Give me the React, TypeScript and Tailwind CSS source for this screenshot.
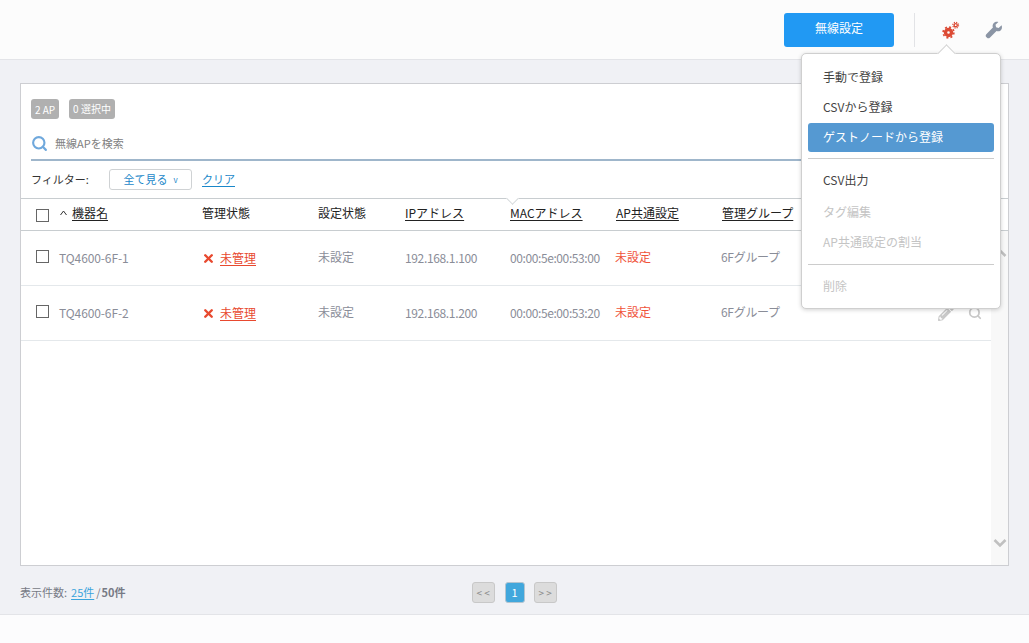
import { Search, X } from 'lucide-react';
import { FaPencilAlt } from 'react-icons/fa';

const font = { fontFamily: '"Noto Sans CJK JP", "Liberation Sans", sans-serif' };

// same column widths for the header and both rows
const cols = 'grid grid-cols-[23px_143px_116px_87px_105px_106px_106px_1fr] items-center pl-[15px]';

const rows = [
  { name: 'TQ4600-6F-1', ip: '192.168.1.100', mac: '00:00:5e:00:53:00' },
  { name: 'TQ4600-6F-2', ip: '192.168.1.200', mac: '00:00:5e:00:53:20' },
];

function Gears() {
  return (
    <svg width="20" height="20" viewBox="0 0 20 20" className="text-[#dc4a34]">
      <circle cx="7.5" cy="12.5" r="3" fill="none" stroke="currentColor" strokeWidth="3.4" />
      <circle cx="7.5" cy="12.5" r="5.4" fill="none" stroke="currentColor" strokeWidth="1.6" strokeDasharray="2 2.24" />
      <circle cx="14.7" cy="5.2" r="1.6" fill="none" stroke="currentColor" strokeWidth="1.4" />
      <circle cx="14.7" cy="5.2" r="2.9" fill="none" stroke="currentColor" strokeWidth="1.1" strokeDasharray="1.2 1.08" />
    </svg>
  );
}

function WrenchIcon() {
  return (
    <svg width="18" height="18" viewBox="0 0 18 18" className="text-[#8b95a5]">
      <path
        d="M16.6 4.2 13.6 7l-2.5-.7-.6-2.5L13.4 1c-2-.6-4 0-5 1.400-.9 1.300-1 2.800-.5 4.100L1.300 13.200c-.8.8-.8 2 0 2.800l.7.7c.8.8 2 .8 2.800 0l6.700-6.700c1.400.5 2.900.3 4.100-.6 1.300-1.100 1.800-3 1-5.200z"
        fill="currentColor"
      />
    </svg>
  );
}

function Menu() {
  return (
    <div className="absolute left-[801px] top-[53px] z-10 w-[200px] h-[256px] rounded-[5px] border border-[#cfcfcf] bg-white shadow-[0_1px_4px_rgba(0,0,0,0.18)] text-[12px]">
      <div className="absolute left-[138px] -top-[7px] w-[13px] h-[13px] rotate-45 border-l border-t border-[#d4d4d4] bg-white" />
      <div className="relative flex flex-col px-[6px] pt-[8px]">
        <div className="h-[30px] pl-[15px] flex items-center text-[#444]">手動で登録</div>
        <div className="h-[30px] pb-[1px] pl-[15px] flex items-center text-[#444]">CSVから登録</div>
        <div className="mt-[1px] h-[29px] pb-[2px] pl-[15px] flex items-center rounded-[3px] bg-[#5599d2] text-white">ゲストノードから登録</div>
        <div className="mt-[6px] border-t border-[#cccccc]" />
        <div className="mt-[6px] h-[30px] pl-[15px] flex items-center text-[#444]">CSV出力</div>
        <div className="mt-[2px] h-[30px] pl-[15px] flex items-center text-[#c4c4c4]">タグ編集</div>
        <div className="h-[30px] pl-[15px] flex items-center text-[#c4c4c4]">AP共通設定の割当</div>
        <div className="mt-[7px] border-t border-[#cccccc]" />
        <div className="mt-[6px] h-[30px] pl-[15px] flex items-center text-[#c4c4c4]">削除</div>
      </div>
    </div>
  );
}

export default function App() {
  return (
    <div className="relative w-[1029px] h-[643px] overflow-hidden flex flex-col bg-[#f0f1f5]" style={font}>
      <header className="h-[60px] shrink-0 flex items-start bg-[#fcfcfc] border-b border-[#e3e4e8]">
        <div className="ml-[784px] mt-[13px] w-[110px] h-[34px] pb-[4px] rounded-[3px] bg-[#2199f3] text-white text-[12px] flex items-center justify-center">
          無線設定
        </div>
        <div className="ml-[20px] mt-[13px] h-[34px] border-l border-[#e2e3e6]" />
        <div className="ml-[26px] mt-[20px]">
          <Gears />
        </div>
        <div className="ml-[24px] mt-[21px]">
          <WrenchIcon />
        </div>
      </header>

      <main className="flex-1 px-[20px] pt-[23px]">
        <section className="relative h-[483px] border border-[#cdced2] bg-white">
          <div className="pl-[10px] pt-[15px] flex gap-[10px] text-[10px] text-white">
            <span className="h-[20px] w-[28px] rounded-[3px] bg-[#b0b0b0] flex items-center justify-center">2 AP</span>
            <span className="h-[20px] w-[46px] pb-[2px] rounded-[3px] bg-[#b0b0b0] flex items-center justify-center whitespace-nowrap">0 選択中</span>
          </div>
          <div className="mx-[10px] mt-[5px] h-[37px] pt-[3px] flex items-center gap-[7px] border-b-2 border-[#9fb6cb] text-[11px] text-[#808080]">
            <Search className="w-[17px] h-[17px] text-[#6fa8dc]" strokeWidth={3} />
            無線APを検索
          </div>
          <div className="pl-[10px] h-[37px] flex items-center text-[11px] text-[#333]">
            <span className="w-[78px]">フィルター:</span>
            <span className="w-[83px] h-[21px] rounded-[3px] border border-[#cfd2d4] flex items-center justify-center gap-[6px] text-[#1a87c9]">
              全て見る <span className="text-[8px]">v</span>
            </span>
            <a className="ml-[10px] text-[#1a87c9] underline underline-offset-2">クリア</a>
          </div>

          <div className={`${cols} relative h-[33px] pb-[4px] border-y border-[#c8cdd0] text-[12px] text-[#222]`}>
            <div className="absolute left-[487px] -top-[1px] w-[9px] h-[9px] -translate-y-[4px] rotate-45 border-r border-b border-[#d4d8da] bg-white" />
            <span className="mt-[6px] w-[13px] h-[13px] border border-[#666]" />
            <span className="flex items-center gap-[5px]">
              <svg width="7" height="6" viewBox="0 0 7 6" className="ml-[1px]">
                <path d="M.5 5 3.500 1 6.500 5" fill="none" stroke="#333" strokeWidth="1" />
              </svg>
              <span className="underline underline-offset-2">機器名</span>
            </span>
            <span>管理状態</span>
            <span>設定状態</span>
            <span className="underline underline-offset-2">IPアドレス</span>
            <span className="underline underline-offset-2">MACアドレス</span>
            <span className="underline underline-offset-2">AP共通設定</span>
            <span className="underline underline-offset-2">管理グループ</span>
          </div>

          {rows.map((r) => (
            <div key={r.name} className={`${cols} relative h-[55px] mr-[17px] border-b border-[#e4e8eb] text-[12px] text-[#8a8d98]`}>
              <span className="mb-[4px] w-[13px] h-[13px] border border-[#666]" />
              <span className="tracking-[-0.1px]">{r.name}</span>
              <span className="flex items-center gap-[5px] text-[#e8492f]">
                <X className="w-[13px] h-[13px]" strokeWidth={4.5} />
                <span className="underline underline-offset-2">未管理</span>
              </span>
              <span className="mb-[2px]">未設定</span>
              <span className="tracking-[-0.35px]">{r.ip}</span>
              <span className="whitespace-nowrap tracking-[-0.4px]">{r.mac}</span>
              <span className="mb-[2px] -ml-[1px] text-[#f0533a]">未設定</span>
              <span className="mb-[2px] -ml-[1px] tracking-[-0.3px]">6Fグループ</span>
              <FaPencilAlt className="absolute left-[917px] top-[19px] w-[16px] h-[16px] text-[#c8c8c8]" />
              <Search className="absolute left-[947px] top-[20px] w-[14px] h-[14px] text-[#c8c8c8]" strokeWidth={3} />
            </div>
          ))}

          <div className="absolute right-0 top-[147px] bottom-0 w-[17px] bg-[#f8f8f8] flex flex-col items-center justify-between pt-[17px] pb-[17px] text-[#c0c0c0]">
            <svg width="14" height="10" viewBox="0 0 14 10"><path d="M1.500 8 7 2.500 12.500 8" fill="none" stroke="currentColor" strokeWidth="2.6" /></svg>
            <svg width="14" height="10" viewBox="0 0 14 10"><path d="M1.500 2 7 7.500 12.500 2" fill="none" stroke="currentColor" strokeWidth="2.6" /></svg>
          </div>
        </section>

        <div className="relative h-[48px] pt-[4px] flex items-center text-[11px] text-[#777a85]">
          <span>表示件数:</span>
          <a className="ml-[4px] text-[#3ba4dc] underline underline-offset-2">25件</a>
          <span className="ml-[2px]">/</span>
          <span className="ml-[1px] font-bold">50件</span>
          <div className="ml-[346px] flex items-center text-[10px]">
            <span className="w-[23px] h-[21px] rounded-[3px] border border-[#c8c8c8] bg-[#dcdcdc] text-[#888] flex items-center justify-center">&lt; &lt;</span>
            <span className="ml-[10px] w-[20px] h-[21px] rounded-[3px] border border-[#b5c5d0] bg-[#41a7dc] text-white text-[11px] flex items-center justify-center">1</span>
            <span className="ml-[9px] w-[23px] h-[21px] rounded-[3px] border border-[#c8c8c8] bg-[#dcdcdc] text-[#888] flex items-center justify-center">&gt; &gt;</span>
          </div>
        </div>
      </main>

      <footer className="h-[30px] shrink-0 bg-[#fcfcfd] border-t border-[#e3e4e8]" />
      <Menu />
    </div>
  );
}
